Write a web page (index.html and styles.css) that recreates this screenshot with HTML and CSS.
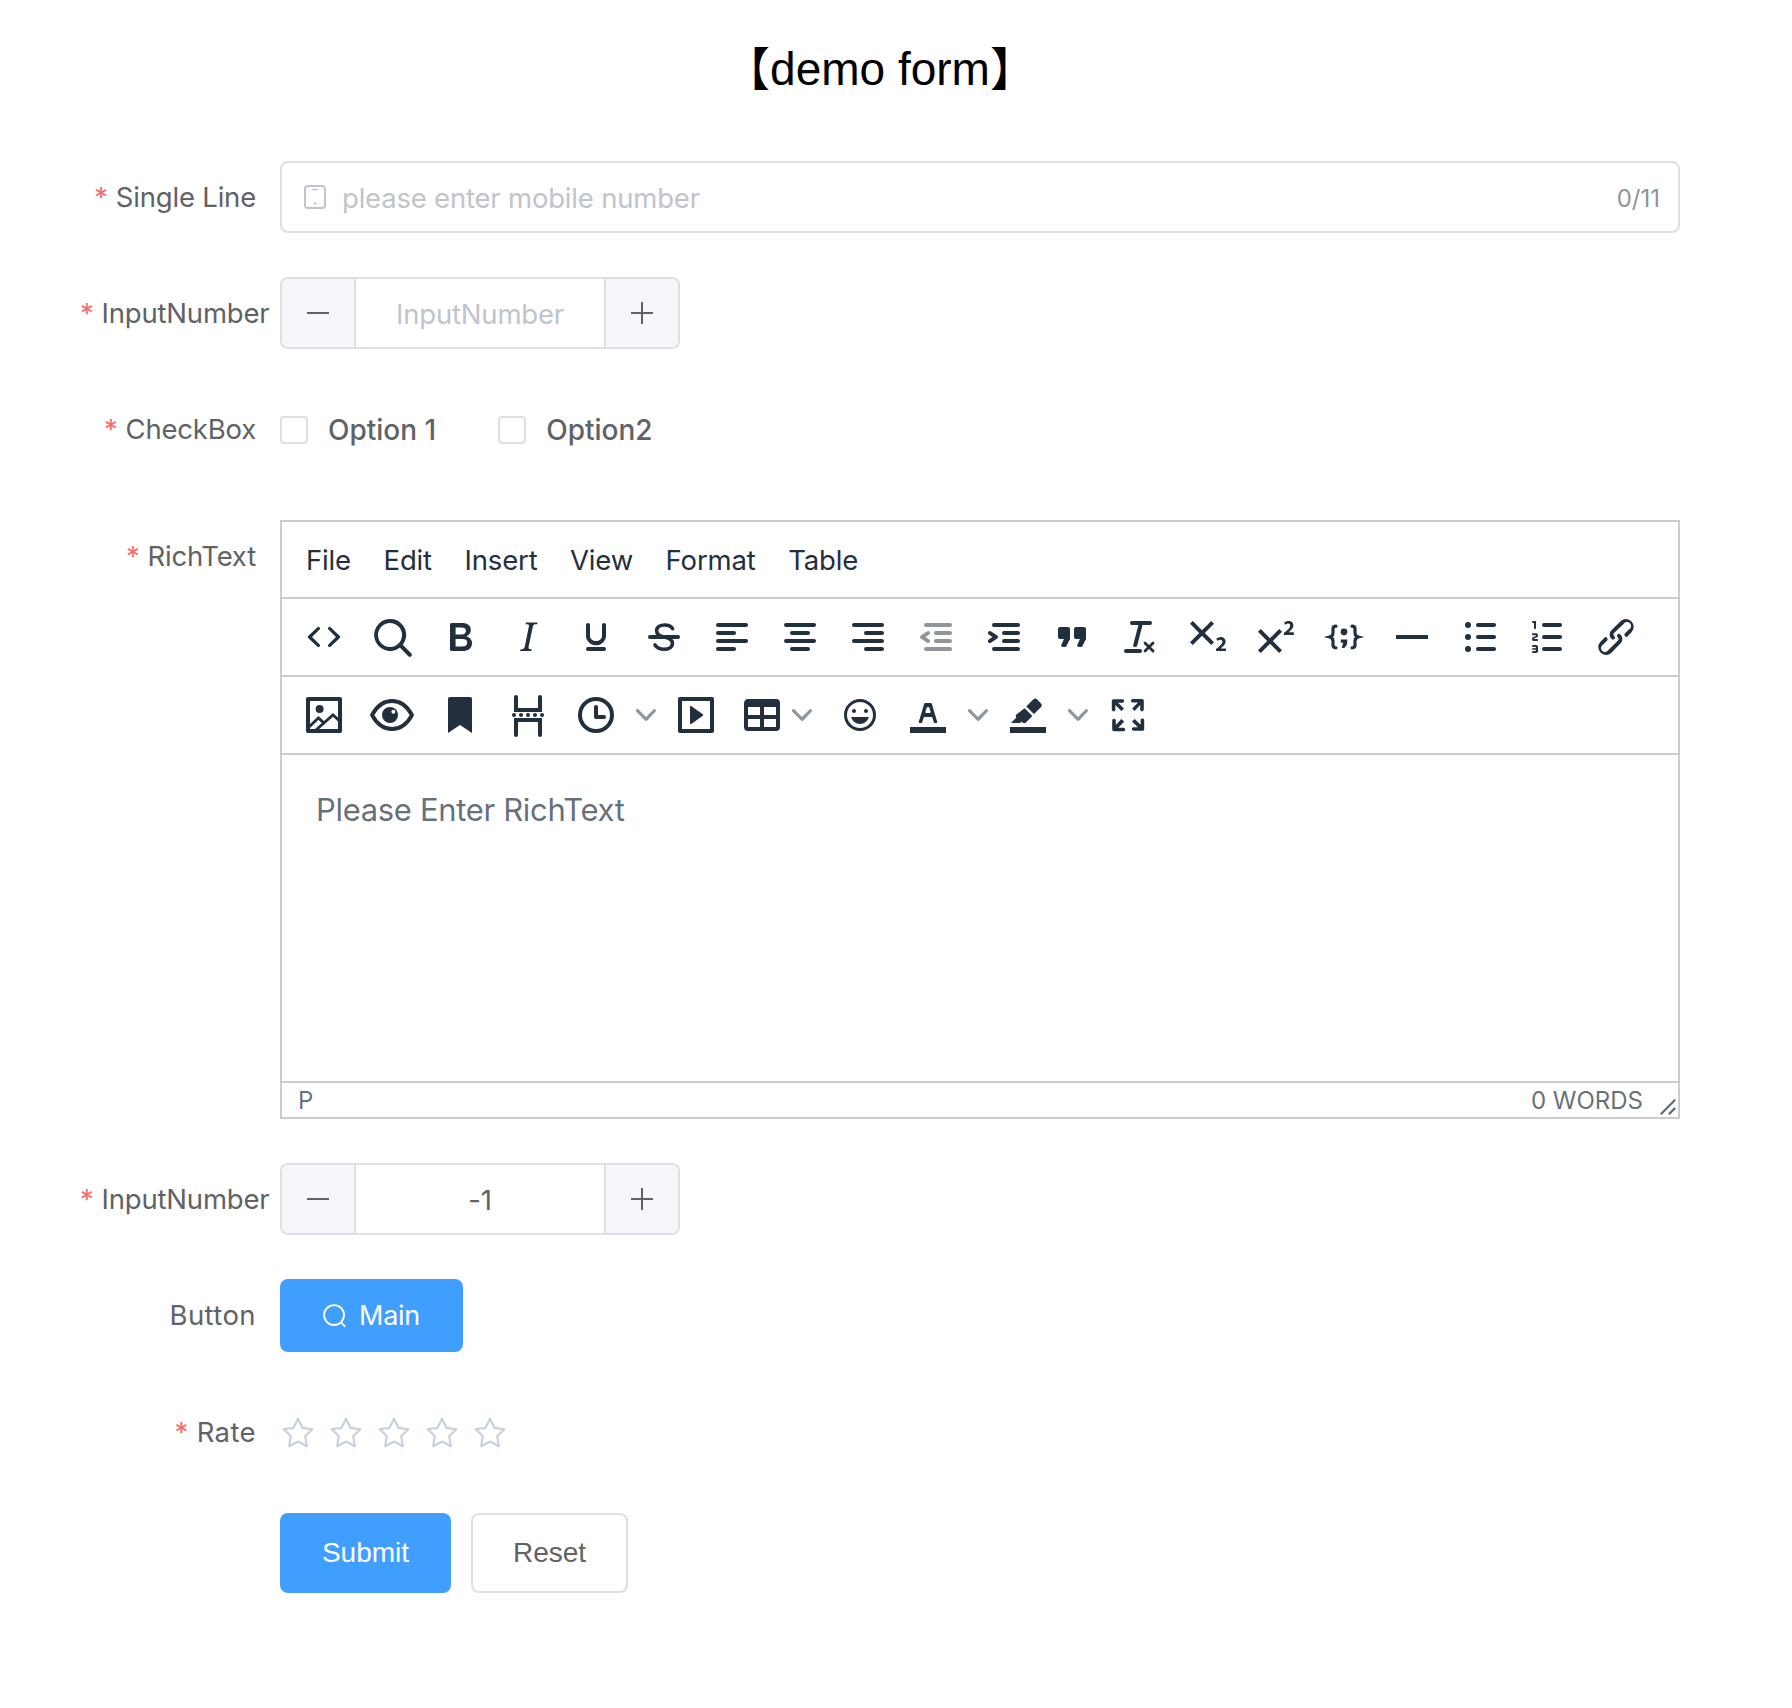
FILE: index.html
```html
<!DOCTYPE html>
<html lang="en">
<head>
  <meta charset="UTF-8" />
  <title>demo form</title>
  <link rel="stylesheet" href="styles.css">
</head>
<body>

  <h1 class="title">【demo form】</h1>

  <form class="form">

    <!-- Single line -->
    <div class="row">
      <label class="label"><span class="req">*</span>Single Line</label>
      <div class="text-input">
        <svg class="prefix" viewBox="0 0 22 24"><rect x="1" y="1" width="20" height="22" rx="3" fill="none" stroke="#c0c4cc" stroke-width="2"/><path d="M8 4.5h6" stroke="#c0c4cc" stroke-width="1.5"/><circle cx="11" cy="18.5" r="1.2" fill="#c0c4cc"/></svg>
        <input type="text" placeholder="please enter mobile number">
        <span class="count">0/11</span>
      </div>
    </div>

    <!-- Input number -->
    <div class="row">
      <label class="label"><span class="req">*</span>InputNumber</label>
      <div class="number">
        <span class="step step-left"><svg viewBox="0 0 24 24"><path d="M1 12h22" stroke="#606266" stroke-width="2"/></svg></span>
        <input type="text" placeholder="InputNumber">
        <span class="step step-right"><svg viewBox="0 0 24 24"><path d="M1 12h22M12 1v22" stroke="#606266" stroke-width="2"/></svg></span>
      </div>
    </div>

    <!-- Checkbox -->
    <div class="row row-check">
      <label class="label"><span class="req">*</span>CheckBox</label>
      <div class="checks">
        <label class="check"><input type="checkbox">Option 1</label>
        <label class="check"><input type="checkbox">Option2</label>
      </div>
    </div>

    <!-- Rich text -->
    <div class="row">
      <label class="label"><span class="req">*</span>RichText</label>
      <div class="editor">
        <div class="menubar">
          <span>File</span><span>Edit</span><span>Insert</span><span>View</span><span>Format</span><span>Table</span>
        </div>
        <div class="toolbar">
          <span class="tb"><svg viewBox="0 0 24 24"><path d="M9.8 15.7c.3.3.3.8 0 1-.3.4-.9.4-1.2 0l-4.4-4.1a.8.8 0 0 1 0-1.2l4.4-4.2c.3-.3.9-.3 1.2 0 .3.3.3.8 0 1.1L6 12l3.8 3.7zM14.2 15.7c-.3.3-.3.8 0 1 .4.4.9.4 1.2 0l4.4-4.1c.3-.3.3-.9 0-1.2l-4.4-4.2a.8.8 0 0 0-1.2 0c-.3.3-.3.8 0 1.1L18 12l-3.8 3.7z"/></svg></span>
          <span class="tb"><svg viewBox="0 0 24 24"><path d="M16 17.3a8 8 0 1 1 1.4-1.4l4.3 4.4a1 1 0 0 1-1.4 1.4l-4.4-4.4zm-5-.3a6 6 0 1 0 0-12 6 6 0 0 0 0 12z"/></svg></span>
          <span class="tb"><svg viewBox="0 0 24 24"><path d="M7.8 19c-.3 0-.5 0-.6-.2l-.2-.5V5.7c0-.2 0-.4.2-.5l.6-.2h5c1.5 0 2.7.3 3.5 1 .7.6 1.1 1.4 1.1 2.5a3 3 0 0 1-.6 1.9c-.4.6-1 1-1.6 1.2.4.1.9.3 1.3.6s.8.7 1 1.2c.4.4.5 1 .5 1.6 0 1.3-.4 2.3-1.3 3-.8.7-2.1 1-3.8 1H7.8zm5-8.3c.6 0 1.2-.1 1.6-.5.4-.3.6-.7.6-1.3 0-1.1-.8-1.7-2.4-1.7H9.8v3.5h3.1zm.5 6c.7 0 1.3-.1 1.7-.4.4-.4.6-.9.6-1.5s-.2-1-.7-1.4c-.4-.3-1-.4-2-.4H9.8v3.8h3.5z"/></svg></span>
          <span class="tb"><svg viewBox="0 0 24 24"><path d="M16.7 4.7l-.1.9h-.3c-.6 0-1 0-1.4.3-.3.3-.4.6-.5 1.1l-2.1 9.8v.6c0 .5.4.8 1.4.8h.2l-.2.8H8l.2-.8h.2c1.1 0 1.8-.5 2-1.5l2-9.8.1-.5c0-.6-.4-.8-1.4-.8h-.3l.2-.9h5.8z"/></svg></span>
          <span class="tb"><svg viewBox="0 0 24 24"><path d="M16 5c.6 0 1 .4 1 1v5.5a4 4 0 0 1-.4 1.8l-1 1.4a5.3 5.3 0 0 1-5.5 1 5 5 0 0 1-1.6-1c-.5-.4-.8-.9-1.1-1.4a4 4 0 0 1-.4-1.8V6c0-.6.4-1 1-1s1 .4 1 1v5.5c0 .3 0 .6.2 1l.6.7a3.3 3.3 0 0 0 2.2.8 3.4 3.4 0 0 0 2.2-.8c.3-.2.4-.5.6-.8l.2-.9V6c0-.6.4-1 1-1zM8 17h8c.6 0 1 .4 1 1s-.4 1-1 1H8a1 1 0 0 1 0-2z"/></svg></span>
          <span class="tb"><svg viewBox="0 0 24 24"><path d="M16.3 7.8C15.5 6.5 14 6 12.3 6 10 6 8.3 7.1 8.3 8.9c0 1.8 1.4 2.6 3.8 3.1 2.6.5 4.1 1.3 4.1 3.2 0 1.8-1.8 2.9-4.2 2.9-1.9 0-3.6-.7-4.5-2.1" fill="none" stroke="#222f3e" stroke-width="1.8" stroke-linecap="round"/><path d="M5 11h14c.6 0 1 .4 1 1s-.4 1-1 1H5a1 1 0 0 1 0-2z"/></svg></span>
          <span class="tb"><svg viewBox="0 0 24 24"><path d="M5 5h14c.6 0 1 .4 1 1s-.4 1-1 1H5a1 1 0 1 1 0-2zm0 4h8c.6 0 1 .4 1 1s-.4 1-1 1H5a1 1 0 1 1 0-2zm0 8h8c.6 0 1 .4 1 1s-.4 1-1 1H5a1 1 0 0 1 0-2zm0-4h14c.6 0 1 .4 1 1s-.4 1-1 1H5a1 1 0 0 1 0-2z"/></svg></span>
          <span class="tb"><svg viewBox="0 0 24 24"><path d="M5 5h14c.6 0 1 .4 1 1s-.4 1-1 1H5a1 1 0 1 1 0-2zm3 4h8c.6 0 1 .4 1 1s-.4 1-1 1H8a1 1 0 1 1 0-2zm0 8h8c.6 0 1 .4 1 1s-.4 1-1 1H8a1 1 0 0 1 0-2zm-3-4h14c.6 0 1 .4 1 1s-.4 1-1 1H5a1 1 0 0 1 0-2z"/></svg></span>
          <span class="tb"><svg viewBox="0 0 24 24"><path d="M5 5h14c.6 0 1 .4 1 1s-.4 1-1 1H5a1 1 0 1 1 0-2zm6 4h8c.6 0 1 .4 1 1s-.4 1-1 1h-8a1 1 0 0 1 0-2zm0 8h8c.6 0 1 .4 1 1s-.4 1-1 1h-8a1 1 0 0 1 0-2zm-6-4h14c.6 0 1 .4 1 1s-.4 1-1 1H5a1 1 0 0 1 0-2z"/></svg></span>
          <span class="tb tb-off"><svg viewBox="0 0 24 24"><path d="M7 5h12c.6 0 1 .4 1 1s-.4 1-1 1H7a1 1 0 1 1 0-2zm5 4h7c.6 0 1 .4 1 1s-.4 1-1 1h-7a1 1 0 0 1 0-2zm0 4h7c.6 0 1 .4 1 1s-.4 1-1 1h-7a1 1 0 0 1 0-2zm-5 4h12a1 1 0 0 1 0 2H7a1 1 0 0 1 0-2zm1.6-3.8a1 1 0 0 1-1.2 1.6l-3-2a1 1 0 0 1 0-1.6l3-2a1 1 0 0 1 1.2 1.6L6.8 12l1.8 1.2z"/></svg></span>
          <span class="tb"><svg viewBox="0 0 24 24"><path d="M7 5h12c.6 0 1 .4 1 1s-.4 1-1 1H7a1 1 0 1 1 0-2zm5 4h7c.6 0 1 .4 1 1s-.4 1-1 1h-7a1 1 0 0 1 0-2zm0 4h7c.6 0 1 .4 1 1s-.4 1-1 1h-7a1 1 0 0 1 0-2zm-5 4h12a1 1 0 0 1 0 2H7a1 1 0 0 1 0-2zm-2.6-3.8L6.2 12l-1.8-1.2a1 1 0 0 1 1.2-1.6l3 2a1 1 0 0 1 0 1.6l-3 2a1 1 0 1 1-1.2-1.6z"/></svg></span>
          <span class="tb"><svg viewBox="0 0 24 24"><path d="M7.5 17h.9c.4 0 .7-.2.9-.6L11 13V8c0-.6-.4-1-1-1H6a1 1 0 0 0-1 1v4c0 .6.4 1 1 1h2l-1.3 2.7a1 1 0 0 0 .8 1.3zm8 0h.9c.4 0 .7-.2.9-.6L19 13V8c0-.6-.4-1-1-1h-4a1 1 0 0 0-1 1v4c0 .6.4 1 1 1h2l-1.3 2.7a1 1 0 0 0 .8 1.3z"/></svg></span>
          <span class="tb"><svg viewBox="0 0 24 24"><path d="M13.2 6a1 1 0 0 1 0 .2l-2.6 10a1 1 0 0 1-1 .8h-.2a.8.8 0 0 1-.8-1l2.6-10H8a1 1 0 1 1 0-2h9a1 1 0 0 1 0 2h-3.8zM5 18h7a1 1 0 0 1 0 2H5a1 1 0 0 1 0-2zm13 1.5L16.5 18 15 19.5a.7.7 0 0 1-1-1l1.5-1.5-1.5-1.5a.7.7 0 0 1 1-1l1.5 1.5 1.5-1.5a.7.7 0 0 1 1 1L17.5 17l1.5 1.5a.7.7 0 0 1-1 1z"/></svg></span>
          <span class="tb"><svg viewBox="0 0 24 24"><path d="M10.4 10l4.6 4.6-1.4 1.4L9 11.4 4.4 16 3 14.6 7.6 10 3 5.4 4.4 4 9 8.6 13.6 4 15 5.4 10.4 10zM21 19h-5v-1l1-.8 1.7-1.6c.3-.4.5-.8.5-1.2 0-.3 0-.6-.2-.7-.2-.2-.5-.3-.9-.3a2 2 0 0 0-.8.2l-.7.3-.4-1.1 1-.6 1.2-.2c.8 0 1.4.3 1.8.7.4.4.6.9.6 1.5s-.2 1.1-.5 1.6a8 8 0 0 1-1.3 1.3l-.6.6h2.6V19z"/></svg></span>
          <span class="tb"><svg viewBox="0 0 24 24"><path d="M15 9.4L10.4 14l4.6 4.6-1.4 1.4L9 15.4 4.4 20 3 18.6 7.6 14 3 9.4 4.4 8 9 12.6 13.6 8 15 9.4zm5.9 1.6h-5v-1l1-.8 1.7-1.6c.3-.5.5-.9.5-1.3 0-.3 0-.5-.2-.7-.2-.2-.5-.3-.9-.3l-.8.2-.7.4-.4-1.2c.2-.2.5-.4 1-.5.3-.2.8-.2 1.2-.2.8 0 1.4.2 1.8.6.4.4.6 1 .6 1.6 0 .5-.2 1-.5 1.5l-1.3 1.4-.6.5h2.6V11z"/></svg></span>
          <span class="tb"><svg viewBox="0 0 24 24"><path d="M8 6.600c-1 0-1.500.5-1.500 1.400v2c0 1-.5 1.700-1.600 2 1.100.3 1.600 1 1.600 2v2c0 .9.5 1.400 1.500 1.400M16 6.600c1 0 1.500.5 1.500 1.400v2c0 1 .5 1.700 1.600 2-1.100.3-1.600 1-1.600 2v2c0 .9-.5 1.400-1.500 1.400" fill="none" stroke="#222f3e" stroke-width="1.600" stroke-linecap="round"/><circle cx="12" cy="9.400" r="1.700"/><path d="M10.400 13.200h3.200v1.500c0 .9-.6 2-1.500 2.800h-1.200l.7-2.600h-1.200z"/></svg></span>
          <span class="tb"><svg viewBox="0 0 24 24"><path d="M4 11h16v2H4z"/></svg></span>
          <span class="tb"><svg viewBox="0 0 24 24"><path d="M11 5h8c.6 0 1 .4 1 1s-.4 1-1 1h-8a1 1 0 0 1 0-2zm0 6h8c.6 0 1 .4 1 1s-.4 1-1 1h-8a1 1 0 0 1 0-2zm0 6h8c.6 0 1 .4 1 1s-.4 1-1 1h-8a1 1 0 0 1 0-2z"/><circle cx="6" cy="6" r="1.5"/><circle cx="6" cy="12" r="1.5"/><circle cx="6" cy="18" r="1.5"/></svg></span>
          <span class="tb"><svg viewBox="0 0 24 24"><path d="M10 17h8c.6 0 1 .4 1 1s-.4 1-1 1h-8a1 1 0 0 1 0-2zm0-6h8c.6 0 1 .4 1 1s-.4 1-1 1h-8a1 1 0 0 1 0-2zm0-6h8c.6 0 1 .4 1 1s-.4 1-1 1h-8a1 1 0 1 1 0-2zM6 4v3.5c0 .3-.2.5-.5.5a.5.5 0 0 1-.5-.5V5h-.5a.5.5 0 0 1 0-1H6zm-1 8.8l.2.2h1.3c.3 0 .5.2.5.5s-.2.5-.5.5H4.900a1 1 0 0 1-.9-1V13c0-.4.3-.8.6-1l1.200-.4.2-.3a.2.2 0 0 0-.2-.2H4.500a.5.5 0 0 1-.5-.5c0-.3.2-.5.5-.5h1.600c.5 0 .9.4.9 1v.1c0 .4-.3.8-.6 1l-1.200.4-.2.3zM7 17v2c0 .6-.4 1-1 1H4.500a.5.5 0 0 1 0-1h1.200c.2 0 .3-.1.3-.3 0-.2-.1-.3-.3-.3H4.400a.4.4 0 1 1 0-.8h1.300c.2 0 .3-.1.3-.3 0-.2-.1-.3-.3-.3H4.500a.5.5 0 1 1 0-1H6c.6 0 1 .4 1 1z"/></svg></span>
          <span class="tb"><svg viewBox="0 0 24 24"><path d="M6.2 12.3a1 1 0 0 1 1.400 1.400l-2 2a2 2 0 1 0 2.600 2.800l4.800-4.800a1 1 0 0 0 0-1.400 1 1 0 1 1 1.400-1.300 2.900 2.900 0 0 1 0 4L9.600 20a3.900 3.900 0 0 1-5.500-5.500l2-2zm11.600-.6a1 1 0 0 1-1.400-1.400l2-2a2 2 0 1 0-2.600-2.800L11 10a1 1 0 0 0 0 1.400 1 1 0 1 1-1.400 1.300 2.900 2.900 0 0 1 0-4L14.400 4a3.900 3.900 0 0 1 5.500 5.500l-2 2z"/></svg></span>
        </div>
        <div class="toolbar">
          <span class="tb"><svg viewBox="0 0 24 24"><path fill-rule="evenodd" d="M4 3h16c.6 0 1 .4 1 1v16c0 .6-.4 1-1 1H4a1 1 0 0 1-1-1V4c0-.6.4-1 1-1zm1 2v14h14V5H5z"/><circle cx="9.800" cy="9" r="2"/><path d="M4.500 18l4.700-4.500 3 2.700M8 19.500l8.500-7.500 3.500 3.200" fill="none" stroke="#222f3e" stroke-width="1.400"/></svg></span>
          <span class="tb"><svg viewBox="0 0 24 24"><path d="M2 12c2.500-4.600 5.800-7 10-7s7.500 2.400 10 7c-2.500 4.600-5.800 7-10 7S4.500 16.600 2 12z" fill="none" stroke="#222f3e" stroke-width="1.900" stroke-linejoin="round"/><circle cx="11" cy="12" r="4"/><circle cx="12.700" cy="10.400" r="1" fill="#fff"/></svg></span>
          <span class="tb"><svg viewBox="0 0 24 24"><path d="M6 4v17l6-4 6 4V4c0-.6-.4-1-1-1H7a1 1 0 0 0-1 1z"/></svg></span>
          <span class="tb"><svg viewBox="0 0 24 24"><path d="M6 3v6.500h12V3M6 22v-7.500h12V22" fill="none" stroke="#222f3e" stroke-width="2" stroke-linecap="round"/><circle cx="5" cy="12" r="1"/><circle cx="8.500" cy="12" r="1"/><circle cx="12" cy="12" r="1"/><circle cx="15.500" cy="12" r="1"/><circle cx="19" cy="12" r="1"/></svg></span>
          <span class="tb"><svg viewBox="0 0 24 24"><circle cx="12" cy="12" r="8" fill="none" stroke="#222f3e" stroke-width="2"/><path d="M12 8v5h4" fill="none" stroke="#222f3e" stroke-width="2" stroke-linecap="round" stroke-linejoin="round"/></svg></span>
          <span class="chev"><svg viewBox="0 0 10 10"><path d="M8.700 2.200c.3-.3.8-.3 1 0 .4.4.4.9 0 1.200L5.700 7.800c-.3.3-.9.3-1.200 0L.2 3.400a.8.8 0 0 1 0-1.200c.3-.3.8-.3 1.100 0L5 6l3.700-3.800z"/></svg></span>
          <span class="tb"><svg viewBox="0 0 24 24"><path d="M4 3h16c.6 0 1 .4 1 1v16c0 .6-.4 1-1 1H4a1 1 0 0 1-1-1V4c0-.6.4-1 1-1zm1 2v14h14V5H5zm4.800 2.600l5.600 4a.5.5 0 0 1 0 .8l-5.600 4A.5.5 0 0 1 9 16V8a.5.5 0 0 1 .8-.4z"/></svg></span>
          <span class="tb-menu"><svg class="menu-ico" viewBox="0 0 24 24"><path d="M19 4a2 2 0 0 1 2 2v12a2 2 0 0 1-2 2H5a2 2 0 0 1-2-2V6c0-1.100.9-2 2-2h14zM5 14v4h6v-4H5zm14 0h-6v4h6v-4zm0-6h-6v4h6V8zM5 12h6V8H5v4z"/></svg><span class="chev"><svg viewBox="0 0 10 10"><path d="M8.700 2.200c.3-.3.8-.3 1 0 .4.4.4.9 0 1.200L5.700 7.800c-.3.3-.9.3-1.200 0L.2 3.400a.8.8 0 0 1 0-1.200c.3-.3.8-.3 1.100 0L5 6l3.700-3.800z"/></svg></span></span>
          <span class="tb"><svg viewBox="0 0 24 24"><path d="M9 11c.6 0 1-.4 1-1s-.4-1-1-1-1 .4-1 1 .4 1 1 1zm6 0c.6 0 1-.4 1-1s-.4-1-1-1-1 .4-1 1 .4 1 1 1zm-3 5.500c2.100 0 4-1.500 4.400-3.500H7.600c.5 2 2.300 3.500 4.400 3.500zM12 4a8 8 0 1 0 0 16 8 8 0 0 0 0-16zm0 14.500a6.500 6.500 0 1 1 0-13 6.500 6.500 0 0 1 0 13z"/></svg></span>
          <span class="tb"><svg viewBox="0 0 24 24"><path d="M3 18h18v3H3z"/><path d="M8.700 16h-.8a.5.5 0 0 1-.5-.6l2.700-9c.1-.3.3-.4.5-.4h2.800c.2 0 .4.1.5.4l2.700 9a.5.5 0 0 1-.5.6h-.8a.5.5 0 0 1-.4-.4l-.7-2.200c0-.3-.3-.4-.5-.4h-3.400c-.2 0-.4.1-.5.4l-.7 2.200c0 .3-.2.4-.4.4zm2.600-7.600l-.6 2a.5.5 0 0 0 .5.6h1.600a.5.5 0 0 0 .5-.6l-.6-2c0-.3-.3-.4-.5-.4h-.4c-.2 0-.4.1-.5.4z"/></svg></span>
          <span class="chev"><svg viewBox="0 0 10 10"><path d="M8.700 2.200c.3-.3.8-.3 1 0 .4.4.4.9 0 1.200L5.700 7.800c-.3.3-.9.3-1.200 0L.2 3.400a.8.8 0 0 1 0-1.200c.3-.3.8-.3 1.100 0L5 6l3.700-3.800z"/></svg></span>
          <span class="tb"><svg viewBox="0 0 24 24"><path d="M3 18h18v3H3z"/><path d="M14.600 4.300a1.400 1.400 0 0 1 2 0l1.800 1.800a1.400 1.400 0 0 1 0 2L15 11.500l-3.900-3.700zM10.300 8.600l3.900 3.900-3.500 3.500H9.500l-.7-.7-.7.7H3.500l2.700-2.700c-.4-.5-.4-1.100 0-1.500z"/></svg></span>
          <span class="chev"><svg viewBox="0 0 10 10"><path d="M8.700 2.200c.3-.3.8-.3 1 0 .4.4.4.9 0 1.200L5.700 7.800c-.3.3-.9.3-1.200 0L.2 3.400a.8.8 0 0 1 0-1.200c.3-.3.8-.3 1.100 0L5 6l3.700-3.800z"/></svg></span>
          <span class="tb"><svg viewBox="0 0 24 24"><path d="M15.300 10l-1.200-1.300 2.900-3h-2.300a.9.9 0 1 1 0-1.700H19c.5 0 .9.4.9.9v4.400a.9.9 0 1 1-1.800 0V7l-2.800 3zm0 4l3 2.900v-2.300c0-.5.4-.9.9-.9s.9.4.9.9V19c0 .5-.4.9-.9.9h-4.400a.9.9 0 1 1 0-1.800H17l-3-2.800 1.300-1.300zM10 15.400l-2.900 3h2.300a.9.9 0 1 1 0 1.700H5a.9.9 0 0 1-.9-.9v-4.400a.9.9 0 1 1 1.800 0V17l2.800-3L10 15.300zM8.700 10L5.700 7v2.300c0 .5-.4.9-.9.9a.9.9 0 0 1-.9-.9V5c0-.5.4-.9.9-.9h4.400a.9.9 0 1 1 0 1.800H7l3 2.800L8.700 10z"/></svg></span>
        </div>
        <div class="editor-body">Please Enter RichText</div>
        <div class="statusbar">
          <span>P</span>
          <span class="words">0 WORDS</span>
          <svg class="resize" viewBox="0 0 20 20"><path d="M2 18L18 2M11 18l7-7" fill="none" stroke="#5f6b78" stroke-width="2.500"/></svg>
        </div>
      </div>
    </div>

    <!-- Input number with a value -->
    <div class="row">
      <label class="label"><span class="req">*</span>InputNumber</label>
      <div class="number">
        <span class="step step-left"><svg viewBox="0 0 24 24"><path d="M1 12h22" stroke="#606266" stroke-width="2"/></svg></span>
        <input type="text" value="-1">
        <span class="step step-right"><svg viewBox="0 0 24 24"><path d="M1 12h22M12 1v22" stroke="#606266" stroke-width="2"/></svg></span>
      </div>
    </div>

    <!-- Button -->
    <div class="row">
      <label class="label label-loose">Button</label>
      <button type="button" class="btn-main">
        <svg viewBox="0 0 26 26"><circle cx="12" cy="12" r="10.800" fill="none" stroke="#fff" stroke-width="2"/><path d="M19.500 20l4.500 4.500" stroke="#fff" stroke-width="2"/></svg>
        Main
      </button>
    </div>

    <!-- Rate -->
    <div class="row row-rate">
      <label class="label label-loose"><span class="req">*</span>Rate</label>
      <div class="stars">
        <svg viewBox="0 0 32 32"><path d="M16 2.500l4.200 8.700 9.300 1.300-6.800 6.600 1.700 9.400-8.400-4.500-8.400 4.500 1.700-9.400-6.800-6.600 9.300-1.300z"/></svg>
        <svg viewBox="0 0 32 32"><path d="M16 2.500l4.200 8.700 9.300 1.300-6.800 6.600 1.700 9.400-8.400-4.500-8.400 4.500 1.700-9.400-6.800-6.600 9.300-1.300z"/></svg>
        <svg viewBox="0 0 32 32"><path d="M16 2.500l4.200 8.700 9.300 1.300-6.800 6.600 1.700 9.400-8.400-4.500-8.400 4.500 1.700-9.400-6.800-6.600 9.300-1.300z"/></svg>
        <svg viewBox="0 0 32 32"><path d="M16 2.500l4.200 8.700 9.300 1.300-6.800 6.600 1.700 9.400-8.400-4.500-8.400 4.500 1.700-9.400-6.800-6.600 9.300-1.300z"/></svg>
        <svg viewBox="0 0 32 32"><path d="M16 2.500l4.200 8.700 9.300 1.300-6.800 6.600 1.700 9.400-8.400-4.500-8.400 4.500 1.700-9.400-6.800-6.600 9.300-1.300z"/></svg>
      </div>
    </div>

    <!-- Actions -->
    <div class="actions">
      <button type="submit" class="btn-submit">Submit</button>
      <button type="reset" class="btn-reset">Reset</button>
    </div>

  </form>

</body>
</html>
```

FILE: styles.css
```css
body {
  margin: 0;
  font-family: Inter, "Liberation Sans", sans-serif;
  color: #606266;
  background-color: #fff;
}

.title {
  width: 1600px;
  height: 120px;
  margin: 0;
  padding: 41px 0 0 80px;
  line-height: 56px;
  text-align: center;
  font-size: 46px;
  font-weight: 400;
  color: #000;
  font-family: "Liberation Sans", "Noto Sans CJK SC", sans-serif;
}

.form {
  width: 1600px;
  margin-left: 80px;
}

.row {
  display: flex;
  align-items: flex-start;
  margin-bottom: 44px;
}

.row-check {
  margin-bottom: 55px;
}

.row-rate {
  margin-bottom: 45px;
}

.label {
  flex: none;
  width: 200px;
  height: 72px;
  padding-right: 24px;
  box-sizing: border-box;
  line-height: 72px;
  font-size: 27.5px;
  letter-spacing: -0.2px;
  white-space: nowrap;
  text-align: right;
  color: #606266;
}

.label-loose {
  letter-spacing: 0.4px;
}

.req {
  margin-right: 8px;
  color: #f56c6c;
}

/* Inputs */
input[type="text"] {
  border: none;
  outline: none;
  padding: 1px 0 0;
  font-family: inherit;
  font-size: 27.5px;
  letter-spacing: -0.2px;
  color: #606266;
  background: transparent;
}

input::placeholder {
  color: #c0c4cc;
  opacity: 1;
}

.text-input {
  flex: 1;
  height: 72px;
  display: flex;
  align-items: center;
  padding: 0 18px 0 22px;
  box-sizing: border-box;
  border: 2px solid #dcdfe6;
  border-radius: 8px;
}

.text-input input {
  flex: 1;
  margin-left: 16px;
}

.prefix {
  width: 22px;
  height: 24px;
}

.count {
  padding-top: 2px;
  font-size: 24px;
  color: #909399;
}

.number {
  display: flex;
  width: 400px;
  height: 72px;
  box-sizing: border-box;
  border: 2px solid #dcdfe6;
  border-radius: 8px;
  overflow: hidden;
}

.number input {
  flex: 1;
  min-width: 0;
  text-align: center;
}

.step {
  flex: none;
  width: 72px;
  display: flex;
  align-items: center;
  justify-content: center;
  background-color: #f5f7fa;
}

.step svg {
  width: 24px;
  height: 24px;
}

.step-left {
  border-right: 2px solid #dcdfe6;
}

.step-right {
  border-left: 2px solid #dcdfe6;
}

/* Checkboxes */
.checks {
  display: flex;
  height: 72px;
  padding-top: 1px;
  box-sizing: border-box;
  align-items: center;
  gap: 62px;
}

.check {
  display: flex;
  align-items: center;
  font-size: 28px;
  font-weight: 500;
}

.check input {
  appearance: none;
  width: 28px;
  height: 28px;
  margin: 0 20px 0 0;
  box-sizing: border-box;
  border: 2px solid #dcdfe6;
  border-radius: 4px;
  background: #fff;
}

/* Rich text editor */
.editor {
  flex: 1;
  height: 599px;
  display: flex;
  flex-direction: column;
  box-sizing: border-box;
  border: 2px solid #ccc;
  color: #222f3e;
}

.menubar {
  flex: none;
  height: 75px;
  display: flex;
  align-items: center;
  gap: 32.5px;
  padding-left: 24px;
  border-bottom: 2px solid #ccc;
  font-size: 27.5px;
  letter-spacing: -0.15px;
}

.toolbar {
  flex: none;
  height: 76px;
  display: flex;
  align-items: center;
  padding-left: 8px;
  border-bottom: 2px solid #ccc;
}

.tb {
  flex: none;
  width: 68px;
  display: flex;
  justify-content: center;
}

.tb svg,
.menu-ico {
  width: 48px;
  height: 48px;
  fill: #222f3e;
}

.tb-off {
  opacity: 0.5;
}

.tb-menu {
  flex: none;
  width: 96px;
  padding-left: 8px;
  box-sizing: border-box;
  display: flex;
  align-items: center;
}

.chev {
  flex: none;
  width: 32px;
  display: flex;
  justify-content: center;
  align-items: center;
  opacity: 0.5;
}

.chev svg {
  width: 20px;
  height: 20px;
  fill: #222f3e;
}

.editor-body {
  flex: 1;
  padding: 31px 34px 0;
  font-size: 31px;
  letter-spacing: -0.33px;
  line-height: 48px;
  color: rgba(34, 47, 62, 0.7);
}

.statusbar {
  flex: none;
  height: 34px;
  position: relative;
  display: flex;
  align-items: center;
  justify-content: space-between;
  padding: 0 35px 0 16px;
  border-top: 2px solid #ccc;
  font-size: 24px;
  color: rgba(34, 47, 62, 0.7);
}

.resize {
  position: absolute;
  right: 1px;
  bottom: 1px;
  width: 18px;
  height: 18px;
}

/* Buttons */
.btn-main {
  width: 183px;
  height: 73px;
  display: flex;
  align-items: center;
  justify-content: center;
  gap: 12px;
  border: none;
  border-radius: 8px;
  background-color: #409eff;
  color: #fff;
  font-family: inherit;
  font-size: 27px;
  letter-spacing: -0.3px;
}

.btn-main svg {
  width: 24px;
  height: 24px;
}

.stars {
  display: flex;
  height: 72px;
  padding: 2px 0 0 1px;
  box-sizing: border-box;
  align-items: center;
  gap: 14px;
}

.stars svg {
  width: 34px;
  height: 34px;
  fill: none;
  stroke: #c6d1de;
  stroke-width: 2;
  stroke-linejoin: round;
}

.actions {
  display: flex;
  gap: 20px;
  padding-left: 200px;
}

.actions button {
  height: 80px;
  border-radius: 8px;
  font-family: "Liberation Sans", sans-serif;
  font-size: 28px;
}

.btn-submit {
  width: 171px;
  border: none;
  background-color: #409eff;
  color: #fff;
}

.btn-reset {
  width: 157px;
  border: 2px solid #dcdfe6;
  background-color: #fff;
  color: #606266;
}
```
